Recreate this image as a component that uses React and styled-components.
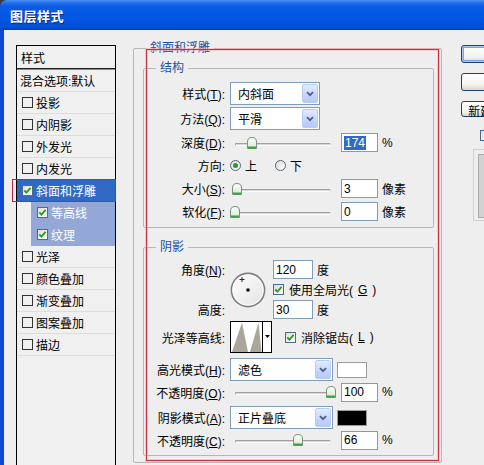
import React from "react";
import styled, { createGlobalStyle } from "styled-components";

const GlobalStyle = createGlobalStyle`
  html, body { margin: 0; padding: 0; }
  body {
    background: #eeeeee;
    font-family: "Liberation Sans", "Noto Sans CJK SC", sans-serif;
    font-size: 12px;
    color: #000;
  }
`;

const Window = styled.div`
  width: 484px;
  height: 465px;
  overflow: hidden;
  display: flex;
  flex-direction: column;
  background: #3a3a3a;
`;

const TitleBar = styled.div`
  height: 30px;
  flex: none;
  display: flex;
  align-items: center;
  padding-left: 10px;
  border-top-left-radius: 7px;
  background: linear-gradient(#4b93f6 0%, #2a74ee 8%, #0a5ce6 20%, #0056e2 60%, #0050d8 90%, #0040bc 100%);
  color: #fff;
  font-weight: bold;
  font-size: 13px;
  letter-spacing: 0.5px;
  text-shadow: 1px 1px 0 #0b2b8c;
`;

const Body = styled.div`
  flex: 1;
  min-height: 0;
  display: flex;
  align-items: flex-start;
  background: #eeeeee;
  border-left: 4px solid #0b48d8;
  padding: 10px 0 0 12px;
`;

/* ---------- left style list ---------- */

const StyleList = styled.div`
  width: 100px;
  box-sizing: border-box;
  flex: none;
  margin-top: 5px;
  height: 430px;
  border: 1px solid #000;
  border-bottom: none;
  background: #f0f0f0;
`;

const ListHead = styled.div`
  height: 22px;
  display: flex;
  align-items: center;
  padding-left: 4px;
  border-bottom: 1px solid #222;
  box-shadow: 0 1px 0 #8c8c8c;
  margin-bottom: 1px;
`;

const ListItem = styled.div`
  position: relative;
  height: 21px;
  display: flex;
  align-items: center;
  gap: 3px;
  border-bottom: 1px solid ${(p) => (p.$sub || p.$selected ? "transparent" : "#dcdcdc")};
  margin-left: ${(p) => (p.$sub ? 14 : 0)}px;
  padding-left: ${(p) => (p.$sub ? 6 : p.$plainText ? 3 : 5)}px;
  background: ${(p) => (p.$selected ? "#316ac5" : p.$sub ? "#94a8d8" : "transparent")};
  color: ${(p) => (p.$selected || p.$sub ? "#fff" : "#000")};
  white-space: nowrap;
`;

const Marker = styled.span`
  position: absolute;
  left: -5px;
  right: -1px;
  top: -1px;
  bottom: -1px;
  border: 1px solid #b3284a;
  pointer-events: none;
`;

const Box = styled.span`
  flex: none;
  width: 11px;
  height: 11px;
  box-sizing: border-box;
  display: flex;
  align-items: center;
  justify-content: center;
  border: 1px solid ${(p) => (p.$plain ? "#333" : "#4f6a86")};
  background: ${(p) => (p.$plain ? "transparent" : "linear-gradient(135deg, #dedcd6, #ffffff)")};
`;

function CheckBox({ checked, plain }) {
  return (
    <Box $plain={plain && !checked}>
      {checked && (
        <svg width="9" height="9" viewBox="0 0 9 9">
          <path d="M1.3 4.3 L3.4 6.6 L7.6 1.8" fill="none" stroke="#21a121" strokeWidth="1.9" />
        </svg>
      )}
    </Box>
  );
}

/* ---------- main group boxes ---------- */

const Main = styled.div`
  position: relative;
  flex: none;
  width: 309px;
  margin-left: 17px;
`;

const Group = styled.fieldset`
  margin: ${(p) => p.$mt || 0}px 0 0 0;
  min-width: 0;
  box-sizing: border-box;
  border: 1px solid #b7b7b7;
  border-radius: 2px;
  padding: ${(p) => p.$pad};
`;

const Legend = styled.legend`
  margin-left: ${(p) => p.$ml}px;
  padding: 0 4px;
  line-height: 16px;
  color: #1d4ea6;
`;

const Annotation = styled.div`
  position: absolute;
  left: 13px;
  top: 9px;
  width: 291px;
  height: 410px;
  border: 1px solid #cc2f3f;
  box-shadow: 0 0 0 1px rgba(255, 170, 170, 0.55), inset 0 0 0 1px rgba(255, 170, 170, 0.55);
  pointer-events: none;
`;

const Row = styled.div`
  display: flex;
  align-items: center;
  height: ${(p) => p.$h}px;
  margin-top: ${(p) => p.$mt || 0}px;
  white-space: nowrap;
`;

const Label = styled.span`
  width: 81px;
  flex: none;
  margin-right: 5px;
  text-align: right;
  white-space: nowrap;
`;

const SelectBox = styled.div`
  width: ${(p) => p.$w}px;
  height: 23px;
  flex: none;
  box-sizing: border-box;
  border: 1px solid #7f9db9;
  background: #fff;
  display: flex;
  align-items: stretch;
  padding: 1px;
`;

const SelectText = styled.span`
  flex: 1;
  display: flex;
  align-items: center;
  padding-left: 6px;
`;

const ArrowBtn = styled.span`
  width: 16px;
  box-sizing: border-box;
  border: 1px solid #b8cbf4;
  border-radius: 2px;
  background: linear-gradient(#e2ebfe, #c4d4fb 60%, #b6c9f7);
  display: flex;
  align-items: center;
  justify-content: center;
`;

function Select({ value, width }) {
  return (
    <SelectBox $w={width}>
      <SelectText>{value}</SelectText>
      <ArrowBtn>
        <svg width="8" height="6" viewBox="0 0 8 6">
          <path d="M1 1.2 L4 4.2 L7 1.2" fill="none" stroke="#4d6185" strokeWidth="1.8" />
        </svg>
      </ArrowBtn>
    </SelectBox>
  );
}

const Field = styled.span`
  width: ${(p) => p.$w || 37}px;
  height: 19px;
  flex: none;
  box-sizing: border-box;
  margin-left: ${(p) => p.$ml || 0}px;
  border: 1px solid #7f9db9;
  background: #fff;
  display: flex;
  align-items: center;
  padding-left: 2px;
`;

const Highlight = styled.span`
  background: #316ac5;
  color: #fff;
  padding: 0 1px;
  line-height: 14px;
`;

const Unit = styled.span`
  margin-left: 4px;
`;

const SliderWrap = styled.div`
  position: relative;
  width: 106px;
  height: 12px;
  flex: none;
`;

const Track = styled.div`
  margin: 6px 5px 0;
  height: 1px;
  border: 1px solid;
  border-color: #a0a0a0 #dcdcdc #ffffff #a0a0a0;
  border-radius: 2px;
  background: #d6d6d6;
`;

const Thumb = styled.svg`
  position: absolute;
  top: 0;
`;

function Slider({ ratio }) {
  return (
    <SliderWrap>
      <Track />
      <Thumb width="10" height="12" viewBox="0 0 10 12" style={{ left: Math.round(ratio * 96) }}>
        <defs>
          <linearGradient id="tg" x1="0" y1="0" x2="0" y2="1">
            <stop offset="0" stopColor="#ffffff" />
            <stop offset="1" stopColor="#d5e9d3" />
          </linearGradient>
        </defs>
        <path d="M0.5 11.5 V5 Q0.5 0.5 5 0.5 Q9.5 0.5 9.5 5 V11.5 Z" fill="url(#tg)" stroke="#7a917a" />
        <line x1="1" y1="10.5" x2="9" y2="10.5" stroke="#3ea43e" strokeWidth="2" />
      </Thumb>
    </SliderWrap>
  );
}

const Radio = styled.span`
  width: 11px;
  height: 11px;
  box-sizing: border-box;
  border-radius: 50%;
  border: 1px solid #4f6578;
  background: linear-gradient(135deg, #dedcd6, #ffffff);
  display: flex;
  align-items: center;
  justify-content: center;
  margin-right: 4px;
  &::after {
    content: "";
    width: 5px;
    height: 5px;
    border-radius: 50%;
    background: #21a121;
    display: ${(p) => (p.$on ? "block" : "none")};
  }
`;

const RadioItem = styled.span`
  display: flex;
  align-items: center;
  margin-right: 18px;
`;

const CheckItem = styled.span`
  display: flex;
  align-items: center;
  gap: 5px;
  margin-left: ${(p) => p.$ml || 0}px;
`;

const AngleGrid = styled.div`
  display: grid;
  grid-template-columns: 86px 43px 1fr;
  grid-template-rows: 19px 19px 19px;
  row-gap: 1px;
  align-items: center;
  white-space: nowrap;
`;

const GridLabel = styled(Label)`
  grid-column: 1;
  grid-row: ${(p) => p.$row};
`;

const Cell = styled.div`
  grid-column: 3;
  grid-row: ${(p) => p.$row};
  display: flex;
  align-items: center;
`;

const Dial = styled.svg`
  grid-column: 2;
  grid-row: 1 / span 3;
  align-self: center;
`;

const ContourBox = styled.div`
  width: 42px;
  height: 32px;
  flex: none;
  box-sizing: border-box;
  border: 1px solid #000;
  background: #fff;
  display: flex;
`;

const ContourArrow = styled.div`
  flex: 1;
  border-left: 1px solid #000;
  display: flex;
  align-items: center;
  justify-content: center;
`;

const Swatch = styled.span`
  width: 30px;
  height: 16px;
  flex: none;
  box-sizing: border-box;
  margin-left: 4px;
  border: 1px solid #9c9c9c;
  background: ${(p) => p.$color};
`;

/* ---------- right buttons ---------- */

const Side = styled.div`
  flex: none;
  margin-left: 19px;
  margin-top: 5px;
  display: flex;
  flex-direction: column;
  align-items: flex-start;
`;

const Button = styled.button`
  width: 92px;
  height: ${(p) => p.$h}px;
  margin-top: ${(p) => p.$mt || 0}px;
  box-sizing: border-box;
  border: 1px solid #1f3f75;
  border-radius: 3px;
  background: linear-gradient(#ffffff, #f2f2ee 70%, #d8d4cb);
  font: inherit;
  color: #000;
  padding: 0;
  white-space: nowrap;
  box-shadow: ${(p) => (p.$default ? "inset 0 0 0 1px #a9c6f7, inset 0 0 0 2px #7aa2ea" : "none")};
`;

const PreviewCheck = styled.div`
  margin: 10px 0 0 19px;
  display: flex;
  align-items: center;
  gap: 4px;
  white-space: nowrap;
`;

const PreviewFrame = styled.div`
  margin: 5px 0 0 12px;
  width: 60px;
  height: 72px;
  box-sizing: border-box;
  border: 1px solid #d0d0d0;
  padding: 4px 0 2px 4px;
  display: flex;
`;

const PreviewInner = styled.div`
  flex: 1;
  background: #d2d2d2;
  border: 1px solid #a9a9a9;
`;

const listItems = [
  { name: "投影" },
  { name: "内阴影" },
  { name: "外发光" },
  { name: "内发光" },
  { name: "斜面和浮雕", checked: true, selected: true },
  { name: "等高线", checked: true, sub: true },
  { name: "纹理", checked: true, sub: true },
  { name: "光泽" },
  { name: "颜色叠加" },
  { name: "渐变叠加" },
  { name: "图案叠加" },
  { name: "描边" },
];

export default function App() {
  return (
    <>
      <GlobalStyle />
      <Window>
        <TitleBar>图层样式</TitleBar>
        <Body>
          <StyleList>
            <ListHead>样式</ListHead>
            <ListItem $plainText>混合选项:默认</ListItem>
            {listItems.map((it) => (
              <ListItem key={it.name} $selected={it.selected} $sub={it.sub}>
                <CheckBox checked={it.checked} plain />
                {it.name}
                {it.selected && <Marker />}
              </ListItem>
            ))}
          </StyleList>

          <Main>
            <Group $pad="4px 7px 6px 9px">
              <Legend $ml={3}>斜面和浮雕</Legend>

              <Group $pad="6px 0 5px 0">
                <Legend $ml={12}>结构</Legend>
                <Row $h={23}>
                  <Label>样式(<u>T</u>):</Label>
                  <Select value="内斜面" width={90} />
                </Row>
                <Row $h={23} $mt={2}>
                  <Label>方法(<u>Q</u>):</Label>
                  <Select value="平滑" width={90} />
                </Row>
                <Row $h={21} $mt={2}>
                  <Label>深度(<u>D</u>):</Label>
                  <Slider ratio={0.174} />
                  <Field $ml={5}>
                    <Highlight>174</Highlight>
                  </Field>
                  <Unit>%</Unit>
                </Row>
                <Row $h={21} $mt={2}>
                  <Label>方向:</Label>
                  <RadioItem>
                    <Radio $on />上
                  </RadioItem>
                  <RadioItem>
                    <Radio />下
                  </RadioItem>
                </Row>
                <Row $h={21} $mt={2}>
                  <Label>大小(<u>S</u>):</Label>
                  <Slider ratio={0.02} />
                  <Field $ml={5}>3</Field>
                  <Unit>像素</Unit>
                </Row>
                <Row $h={21} $mt={2}>
                  <Label>软化(<u>F</u>):</Label>
                  <Slider ratio={0} />
                  <Field $ml={5}>0</Field>
                  <Unit>像素</Unit>
                </Row>
              </Group>

              <Group $mt={11} $pad="5px 0 5px 0">
                <Legend $ml={12}>阴影</Legend>
                <AngleGrid>
                  <GridLabel $row={1}>角度(<u>N</u>):</GridLabel>
                  <Dial width="36" height="36" viewBox="0 0 36 36">
                    <defs>
                      <linearGradient id="dg" x1="0" y1="0" x2="1" y2="1">
                        <stop offset="0" stopColor="#ffffff" />
                        <stop offset="1" stopColor="#e2e2e2" />
                      </linearGradient>
                    </defs>
                    <circle cx="18" cy="18" r="16.6" fill="url(#dg)" stroke="#7d7d7d" strokeWidth="1.6" />
                    <circle cx="18" cy="18" r="15.2" fill="none" stroke="#ffffff" strokeWidth="0.8" />
                    <path d="M12 5 V10 M9.5 7.5 H14.5" stroke="#222" strokeWidth="1" />
                    <rect x="16.5" y="16.5" width="3" height="3" fill="#000" />
                  </Dial>
                  <Cell $row={1}>
                    <Field $w={40}>120</Field>
                    <Unit>度</Unit>
                  </Cell>
                  <Cell $row={2}>
                    <CheckItem>
                      <CheckBox checked />
                      使用全局光(<u>G</u>)
                    </CheckItem>
                  </Cell>
                  <GridLabel $row={3}>高度:</GridLabel>
                  <Cell $row={3}>
                    <Field $w={40}>30</Field>
                    <Unit>度</Unit>
                  </Cell>
                </AngleGrid>

                <Row $h={32} $mt={2}>
                  <Label>光泽等高线:</Label>
                  <ContourBox>
                    <svg width="31" height="30" viewBox="0 0 31 30">
                      <path d="M1 30 L11 0.5 L17 30 Z M19 30 L27.5 0.5 L30.5 30 Z" fill="#aaa699" />
                    </svg>
                    <ContourArrow>
                      <svg width="5" height="4" viewBox="0 0 5 4">
                        <path d="M0 0 H5 L2.5 3 Z" fill="#000" />
                      </svg>
                    </ContourArrow>
                  </ContourBox>
                  <CheckItem $ml={13}>
                    <CheckBox checked />
                    消除锯齿(<u>L</u>)
                  </CheckItem>
                </Row>

                <Row $h={23} $mt={5}>
                  <Label>高光模式(<u>H</u>):</Label>
                  <Select value="滤色" width={103} />
                  <Swatch $color="#ffffff" />
                </Row>
                <Row $h={20} $mt={1}>
                  <Label>不透明度(<u>O</u>):</Label>
                  <Slider ratio={1} />
                  <Field $ml={5}>100</Field>
                  <Unit>%</Unit>
                </Row>
                <Row $h={23} $mt={4}>
                  <Label>阴影模式(<u>A</u>):</Label>
                  <Select value="正片叠底" width={103} />
                  <Swatch $color="#000000" />
                </Row>
                <Row $h={20} $mt={1}>
                  <Label>不透明度(<u>C</u>):</Label>
                  <Slider ratio={0.66} />
                  <Field $ml={5}>66</Field>
                  <Unit>%</Unit>
                </Row>
              </Group>
            </Group>
            <Annotation />
          </Main>

          <Side>
            <Button $h={18} $default>确定</Button>
            <Button $h={18} $mt={10}>取消</Button>
            <Button $h={16} $mt={10}>新建样式(<u>W</u>)...</Button>
            <PreviewCheck>
              <CheckBox />
              预览(<u>V</u>)
            </PreviewCheck>
            <PreviewFrame>
              <PreviewInner />
            </PreviewFrame>
          </Side>
        </Body>
      </Window>
    </>
  );
}
